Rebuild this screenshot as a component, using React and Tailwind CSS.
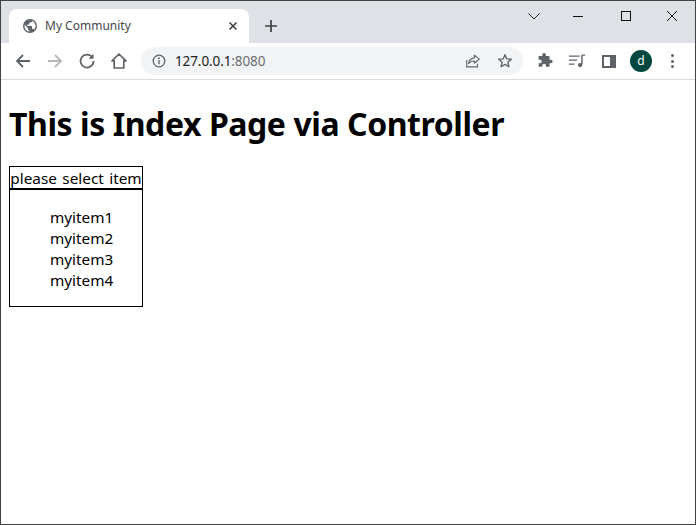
import React from "react";

const ui = { fontFamily: '"Noto Sans", Roboto, sans-serif' };

function Globe() {
  return (
    <svg width="16" height="16" viewBox="0 0 16 16" fill="#5f6368">
      <path d="M8 1a7 7 0 1 0 0 14A7 7 0 0 0 8 1zM7.300 13.500A5.600 5.600 0 0 1 2.500 8c0-.4 0-.8.1-1.200L6 10.200v.7c0 .8.6 1.400 1.300 1.400v1.200zm4.800-1.800c-.2-.6-.7-1-1.300-1H10V8.700c0-.4-.3-.7-.7-.7H5.200V6.600h1.400c.4 0 .7-.3.7-.7V4.500h1.400c.8 0 1.400-.6 1.400-1.400V2.800a5.600 5.600 0 0 1 2 8.900z" />
    </svg>
  );
}

function ToolIcon({ children, size = 20, className = "" }) {
  return (
    <svg width={size} height={size} viewBox="0 0 20 20" fill="none" className={className}>
      {children}
    </svg>
  );
}

function WindowControls() {
  return (
    <div className="flex items-center absolute top-[5px] right-0 h-5">
      <svg width="14" height="14" viewBox="0 0 14 14" className="mr-[32px]" fill="none" stroke="#222" strokeWidth="1">
        <path d="M1.500 4.500 7 10l5.500-5.500" />
      </svg>
      <svg width="12" height="12" viewBox="0 0 12 12" className="mr-[35px]" fill="none" stroke="#111" strokeWidth="1">
        <path d="M0 6.500h10" />
      </svg>
      <svg width="12" height="12" viewBox="0 0 12 12" className="mr-[34px]" fill="none" stroke="#111" strokeWidth="1">
        <rect x="1.500" y="1.500" width="9" height="9" />
      </svg>
      <svg width="12" height="12" viewBox="0 0 12 12" className="mr-[17px]" fill="none" stroke="#111" strokeWidth="1">
        <path d="M1 1l10 10M11 1 1 11" />
      </svg>
    </div>
  );
}

export default function App() {
  return (
    <div className="h-[525px] w-[696px] overflow-hidden border border-[#444] bg-white">
      {/* tab strip */}
      <div className="relative h-[42px] bg-[#dee1e6] pl-2 pt-2 flex items-start">
        <div className="h-[34px] w-[240px] bg-white rounded-t-lg flex items-center pl-[13px] pr-[5px]" style={ui}>
          <Globe />
          <span className="ml-[7px] text-[12px] text-[#45474a] flex-1">My Community</span>
          <svg width="16" height="16" viewBox="0 0 16 16" stroke="#3c4043" strokeWidth="1.600" className="mr-[3px]">
            <path d="M4.500 4.500l7 7M11.500 4.500l-7 7" />
          </svg>
        </div>
        <svg width="16" height="16" viewBox="0 0 16 16" stroke="#3c4043" strokeWidth="1.700" className="ml-[14px] mt-[9px]">
          <path d="M8 2v12M2 8h12" />
        </svg>
        <WindowControls />
      </div>

      {/* toolbar */}
      <div className="h-[37px] bg-white border-b border-[#dadce0] flex items-center pl-[12px]">
        <ToolIcon>
          <path d="M17 10H4.500M10 4l-6 6 6 6" stroke="#5f6368" strokeWidth="1.800" />
        </ToolIcon>
        <ToolIcon className="ml-[12px]">
          <path d="M3 10h12.500M10 4l6 6-6 6" stroke="#b5b7ba" strokeWidth="1.800" />
        </ToolIcon>
        <ToolIcon className="ml-[12px]">
          <path d="M15.300 6.300A6.500 6.500 0 1 0 16.500 10" stroke="#5f6368" strokeWidth="1.800" />
          <path d="M16.500 2.800v5h-5z" fill="#5f6368" />
        </ToolIcon>
        <ToolIcon className="ml-[12px]">
          <path d="M10 3 3 9.800h2.200V17h9.600V9.800H17z" stroke="#5f6368" strokeWidth="1.700" strokeLinejoin="round" />
        </ToolIcon>

        {/* address bar */}
        <div className="ml-[12px] h-[28px] w-[382px] rounded-full bg-[#f1f3f4] flex items-center pl-[11px] pr-[9px]" style={ui}>
          <svg width="14" height="14" viewBox="0 0 14 14" fill="none">
            <circle cx="7" cy="7" r="5.800" stroke="#5f6368" strokeWidth="1.300" />
            <path d="M7 6.300v4" stroke="#5f6368" strokeWidth="1.400" />
            <circle cx="7" cy="4.200" r=".9" fill="#5f6368" />
          </svg>
          <span className="ml-[9px] text-[13.500px] tracking-[-0.1px] text-[#202124] flex-1">
            127.0.0.1<span className="text-[#6a6e73]">:8080</span>
          </span>
          <ToolIcon size={18}>
            <path d="M3 9v7.500h12V13" stroke="#5f6368" strokeWidth="1.200" />
            <path d="M11.500 3.500 17 8l-5.500 4.500V10c-3 0-5 1-6.500 3 .5-3.500 2.500-6 6.500-6.500z" stroke="#5f6368" strokeWidth="1.200" strokeLinejoin="round" />
          </ToolIcon>
          <ToolIcon size={18} className="ml-[14px]">
            <path d="M10 3l2 4.700 5 .4-3.800 3.300 1.200 5L10 13.700 5.600 16.400l1.200-5L3 8.100l5-.4z" stroke="#5f6368" strokeWidth="1.500" strokeLinejoin="round" />
          </ToolIcon>
        </div>

        <ToolIcon size={18} className="ml-[13px]">
          <path d="M3 6h4V4.500a2 2 0 0 1 4 0V6h4v4h1.500a2 2 0 0 1 0 4H15v4h-4v-1.500a2 2 0 0 0-4 0V18H3v-4h1.500a2 2 0 0 0 0-4H3z" fill="#5f6368" transform="translate(0 -1.500)" />
        </ToolIcon>
        <ToolIcon size={18} className="ml-[14px]">
          <path d="M1 4.500h12M1 9h9M1 13.500h6" stroke="#5f6368" strokeWidth="1.500" />
          <path d="M15.500 3.500h3.500M15.500 3.500V14" stroke="#5f6368" strokeWidth="1.600" />
          <circle cx="13.500" cy="14.500" r="2.400" fill="#5f6368" />
        </ToolIcon>
        <div className="ml-[16px] h-[13px] w-[14px] border-[2px] border-r-[6px] border-[#5f6368]" />
        <div className="ml-[14px] h-[22px] w-[22px] rounded-full bg-[#00483f] text-white text-[12px] flex items-center justify-center" style={ui}>
          d
        </div>
        <div className="ml-[19px] flex flex-col gap-[2.500px]">
          <div className="h-[3px] w-[3px] rounded-full bg-[#5f6368]" />
          <div className="h-[3px] w-[3px] rounded-full bg-[#5f6368]" />
          <div className="h-[3px] w-[3px] rounded-full bg-[#5f6368]" />
        </div>
      </div>

      {/* page */}
      <div className="px-2 pt-[21px] text-black" style={ui}>
        <h1 className="text-[32px] font-bold leading-[46px] tracking-[-0.43px] whitespace-nowrap">This is Index Page via Controller</h1>
        <div className="mt-[19px] w-[134px] h-[141px] border border-black">
          <div className="h-[23px] border-b-2 border-black text-[15.300px] leading-[23px] [word-spacing:1.500px] text-center whitespace-nowrap">please select item</div>
          <ul className="mt-[17px] pl-[40px] text-[15.300px] leading-[21px]">
            <li>myitem1</li>
            <li>myitem2</li>
            <li>myitem3</li>
            <li>myitem4</li>
          </ul>
        </div>
      </div>
    </div>
  );
}
